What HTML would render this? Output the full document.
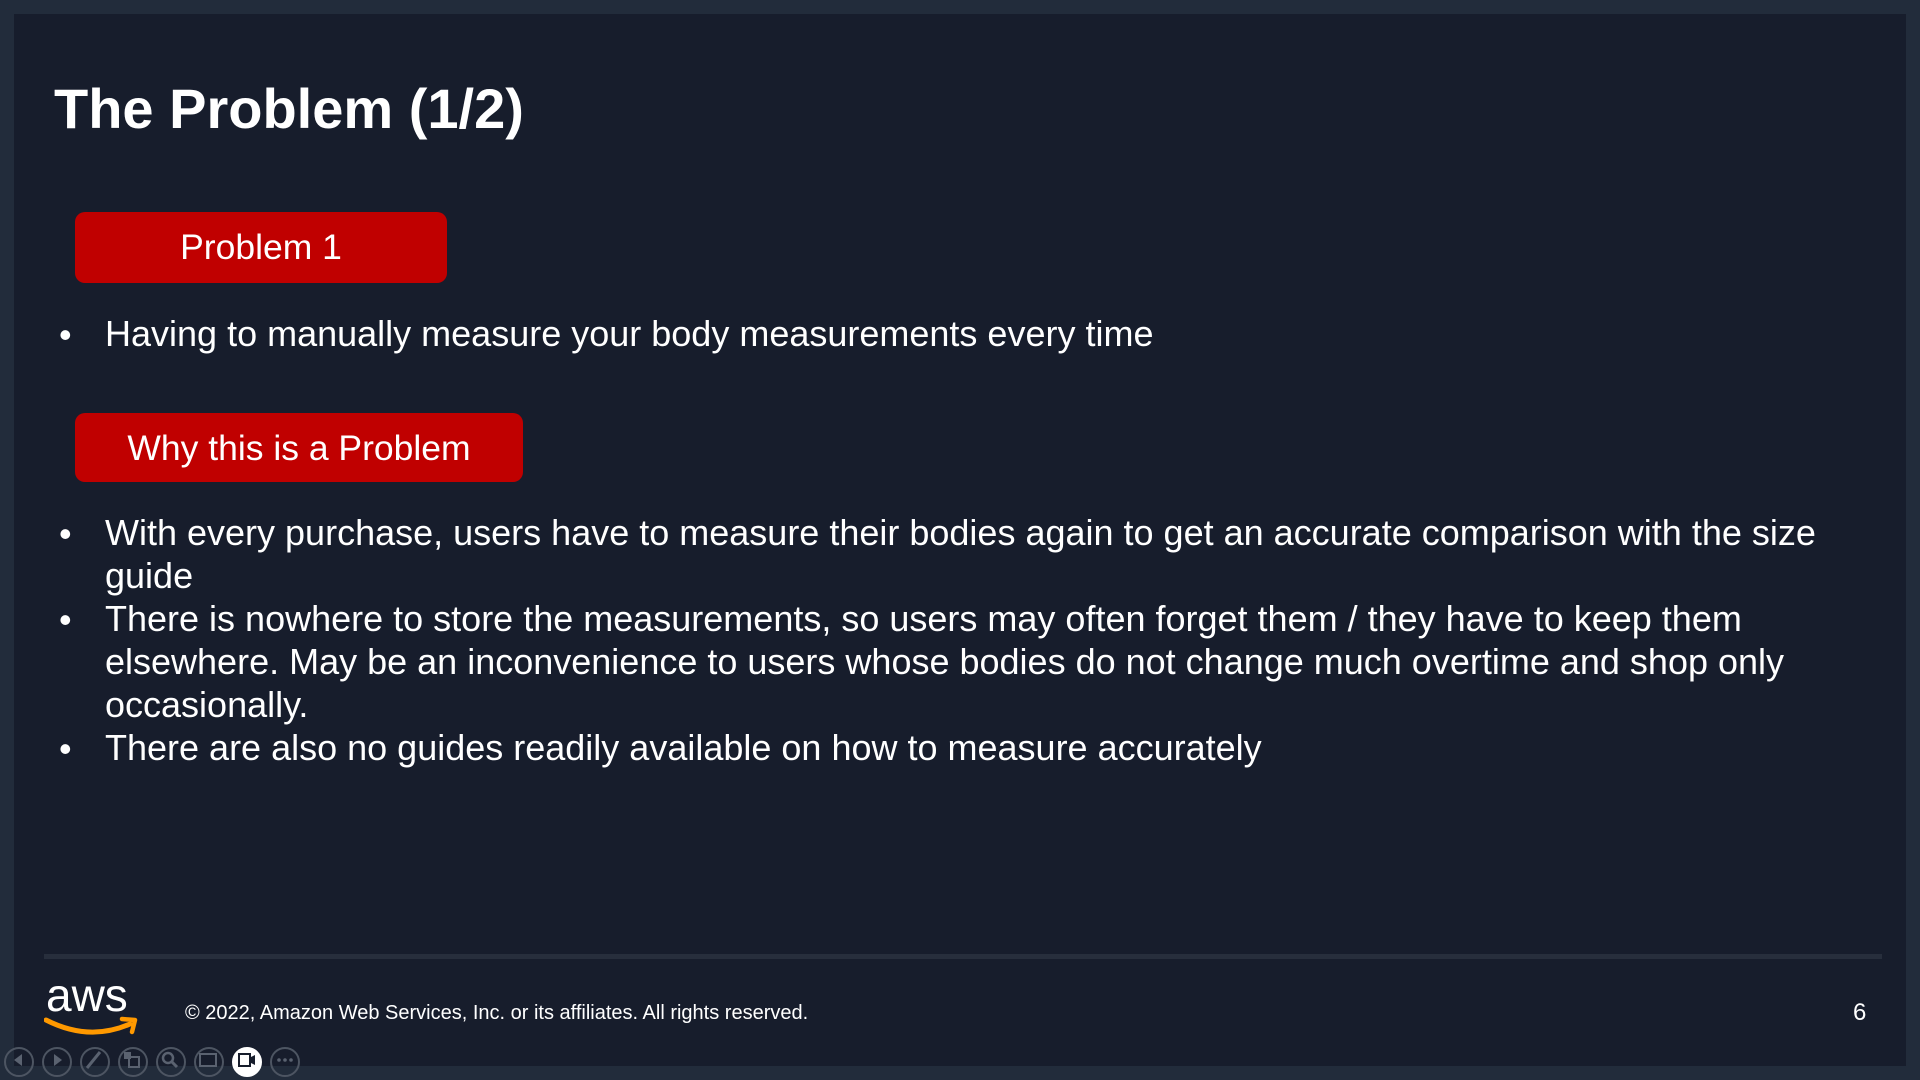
<!DOCTYPE html>
<html><head><meta charset="utf-8"><style>
html,body{margin:0;padding:0;width:1920px;height:1080px;overflow:hidden;background:#222c3b;font-family:"Liberation Sans",Arial,sans-serif;color:#fff}
.slide{position:absolute;left:14px;top:14px;width:1892px;height:1052px;background:#171d2c}
.abs{position:absolute;white-space:nowrap}
h1{position:absolute;left:54px;top:74px;margin:0;font-size:56px;font-weight:bold;line-height:70px}
.box{position:absolute;left:75px;background:#c00000;border-radius:10px;font-size:35.5px;text-align:center;line-height:71px}
.txt{position:absolute;left:105px;font-size:36px;line-height:43px;white-space:nowrap}
.dot{position:absolute;left:59px;font-size:36px;line-height:43px}
.sep{position:absolute;left:44px;top:954px;width:1838px;height:5px;background:#272e3c}
.btn{position:absolute;top:1047px;width:26px;height:26px;border:2px solid #4d5562;border-radius:50%}
</style></head><body>
<div class="slide"></div>
<h1>The Problem (1/2)</h1>
<div class="box" style="top:212px;width:372px;height:71px">Problem 1</div>
<div class="dot" style="top:313px">•</div>
<div class="txt" style="top:312px">Having to manually measure your body measurements every time</div>
<div class="box" style="top:413px;width:448px;height:69px">Why this is a Problem</div>
<div class="dot" style="top:512px">•</div>
<div class="txt" style="top:511px">With every purchase, users have to measure their bodies again to get an accurate comparison with the size<br>guide</div>
<div class="dot" style="top:598px">•</div>
<div class="txt" style="top:597px">There is nowhere to store the measurements, so users may often forget them / they have to keep them<br>elsewhere. May be an inconvenience to users whose bodies do not change much overtime and shop only<br>occasionally.</div>
<div class="dot" style="top:727px">•</div>
<div class="txt" style="top:726px">There are also no guides readily available on how to measure accurately</div>
<div class="sep"></div>
<div class="abs" style="left:46px;top:970px;font-size:46px;line-height:50px;letter-spacing:0px">aws</div>
<svg class="abs" style="left:44px;top:1016px" width="96" height="24" viewBox="0 0 96 24"><path d="M2 4 Q45 26 86 8" stroke="#ff9900" stroke-width="5" fill="none" stroke-linecap="round"/><path d="M78 3 L91 4 L88 16" stroke="#ff9900" stroke-width="4.5" fill="none" stroke-linecap="round" stroke-linejoin="round"/></svg>
<div class="abs" style="left:185px;top:1000px;font-size:20px;line-height:26px">© 2022, Amazon Web Services, Inc. or its affiliates. All rights reserved.</div>
<div class="abs" style="left:1853px;top:998px;font-size:24px;line-height:30px">6</div>
<div class="btn" style="left:4px"></div>
<div class="btn" style="left:42px"></div>
<div class="btn" style="left:80px"></div>
<div class="btn" style="left:118px"></div>
<div class="btn" style="left:156px"></div>
<div class="btn" style="left:194px"></div>
<div class="btn" style="left:232px;background:#fff;border-color:#fff"></div>
<div class="btn" style="left:270px"></div>
<svg class="abs" style="left:0;top:1040px" width="300" height="40">
<path d="M22 14 L14 20 L22 26Z" fill="#5a6270"/>
<path d="M54 14 L62 20 L54 26Z" fill="#5a6270"/>
<path d="M87 28 L100 12" stroke="#5a6270" stroke-width="3"/>
<rect x="124" y="12" width="7" height="7" fill="#5a6270"/><rect x="129" y="17" width="10" height="10" fill="none" stroke="#5a6270" stroke-width="2"/>
<circle cx="168" cy="18" r="5" fill="none" stroke="#5a6270" stroke-width="2.5"/><path d="M172 22 L177 27" stroke="#5a6270" stroke-width="3"/>
<rect x="200" y="14" width="16" height="12" fill="none" stroke="#5a6270" stroke-width="2"/>
<rect x="239" y="14" width="11" height="12" fill="none" stroke="#171d2c" stroke-width="2"/><path d="M251 17 L255 15 L255 25 L251 23Z" fill="#171d2c"/>
<circle cx="279" cy="20" r="1.8" fill="#5a6270"/><circle cx="285" cy="20" r="1.8" fill="#5a6270"/><circle cx="291" cy="20" r="1.8" fill="#5a6270"/>
</svg>
</body></html>
